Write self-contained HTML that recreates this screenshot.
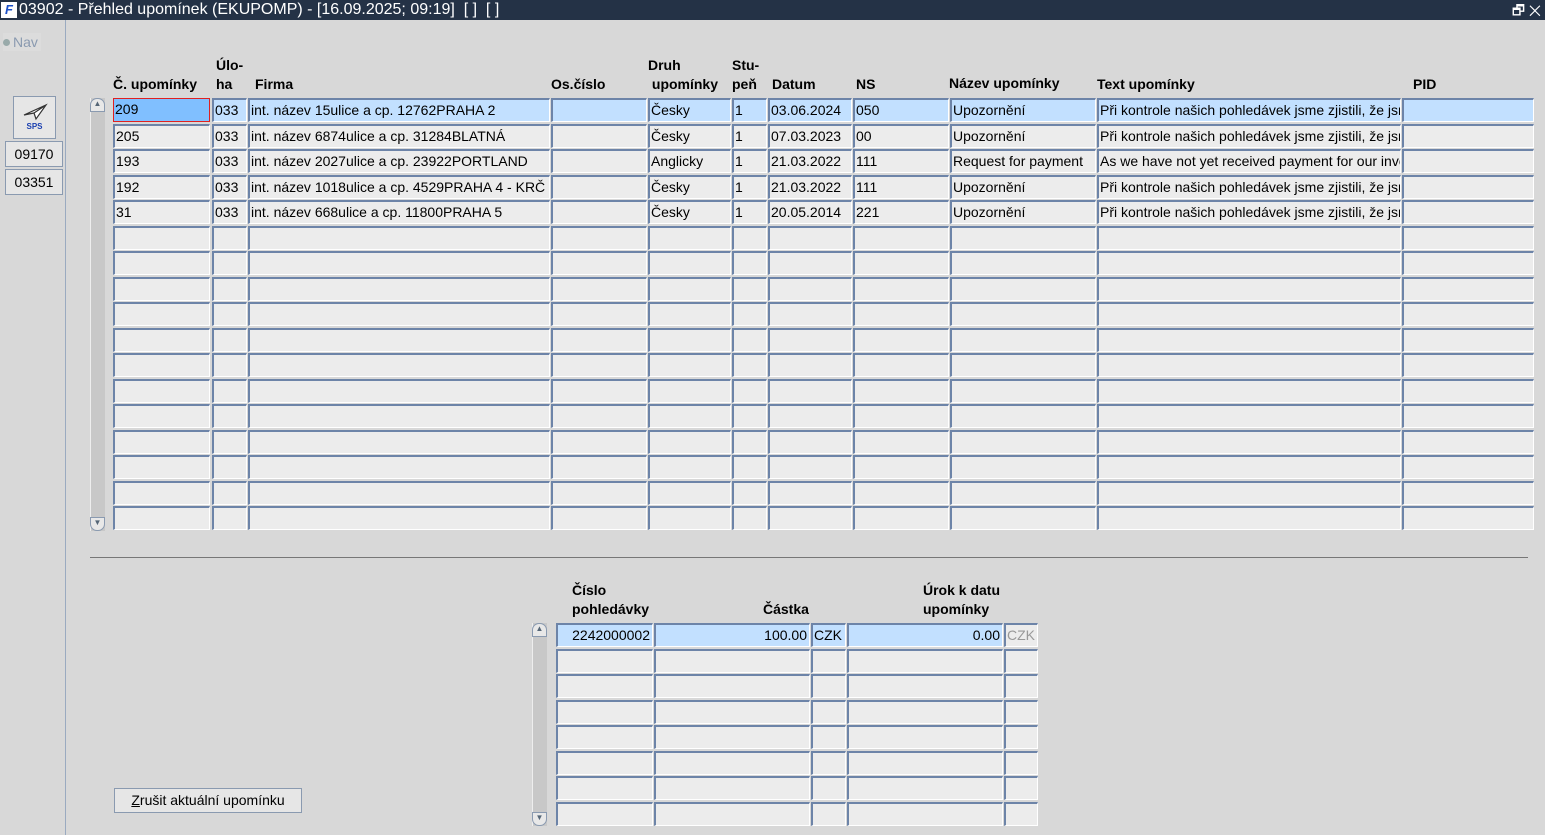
<!DOCTYPE html>
<html><head><meta charset="utf-8"><style>
body{margin:0;width:1545px;height:835px;background:#d8d8d8;font-family:"Liberation Sans",Arial,sans-serif;position:relative;overflow:hidden}
.a{position:absolute}
#title{left:0;top:0;width:1545px;height:20px;background:#243246;color:#fff;font-size:16px;line-height:20px}
.c{position:absolute;box-sizing:border-box;height:24px;background:#ececec;border-top:2px solid #6d84a8;border-left:2px solid #6d84a8;border-bottom:1px solid #fff;border-right:1px solid #fff;font-size:14px;line-height:20px;padding-left:1px;white-space:nowrap;overflow:hidden;color:#000}
.s{background:#c2e0ff}
.h{position:absolute;font-size:14px;font-weight:bold;line-height:19px;color:#000}
.btn{position:absolute;box-sizing:border-box;background:#e6e6e6;border:1px solid #8a9ab0;font-size:14px;text-align:center}
.sb{position:absolute;background:#c8c8c8;border-left:1px solid #eee}
.arr{position:absolute;left:-1px;width:15px;height:14px;background:#e8e8e8;border:1px solid #8a9ab0;box-sizing:border-box}
</style></head><body>
<div id="title" class="a"><span style="display:inline-block;width:16px;height:16px;background:#fff;color:#1a4fc9;font-size:13px;font-weight:bold;line-height:16px;text-align:center;vertical-align:top;margin:2px 2px 0 1px;font-style:italic">F</span>03902 - Přehled upomínek (EKUPOMP) - [16.09.2025; 09:19]&nbsp; [ ]&nbsp; [ ]<span style="position:absolute;right:4px;top:0;font-size:14px">🗗 ✕</span></div>
<div class="a" style="left:65px;top:20px;width:1px;height:815px;background:#9aaac0"></div>
<div class="a" style="left:3px;top:33px;width:38px;height:18px;background:#dcdcdc;color:#8a9ab0;font-size:14px;line-height:18px"><span style="display:inline-block;width:7px;height:7px;border-radius:50%;background:#9aa;margin-right:3px;vertical-align:1px"></span>Nav</div>
<div class="btn" style="left:13px;top:96px;width:43px;height:43px;font-size:8px;color:#1a3fb0;padding-top:25px;font-weight:bold">SPS<svg class="a" style="left:8px;top:6px" width="26" height="18"><path d="M2 12 L24 2 L14 16 L12 10 Z M12 10 L24 2" fill="#fff" stroke="#333" stroke-width="1.2"/></svg></div>
<div class="btn" style="left:5px;top:141px;width:58px;height:26px;line-height:24px">09170</div>
<div class="btn" style="left:5px;top:169px;width:58px;height:26px;line-height:24px">03351</div>
<div class="h" style="left:113px;top:75px">Č. upomínky</div>
<div class="h" style="left:216px;top:56px">Úlo-<br>ha</div>
<div class="h" style="left:255px;top:75px">Firma</div>
<div class="h" style="left:551px;top:75px">Os.číslo</div>
<div class="h" style="left:648px;top:56px">Druh<br>&nbsp;upomínky</div>
<div class="h" style="left:732px;top:56px">Stu-<br>peň</div>
<div class="h" style="left:772px;top:75px">Datum</div>
<div class="h" style="left:856px;top:75px">NS</div>
<div class="h" style="left:949px;top:74px">Název upomínky</div>
<div class="h" style="left:1097px;top:75px">Text upomínky</div>
<div class="h" style="left:1413px;top:75px">PID</div>
<div class="h" style="left:572px;top:581px">Číslo<br>pohledávky</div>
<div class="h" style="left:763px;top:600px">Částka</div>
<div class="h" style="left:923px;top:581px">Úrok k datu<br>upomínky</div>
<div class="sb" style="left:90px;top:98px;width:14px;height:433px"><div class="arr" style="top:0;border-radius:7px 7px 0 0;font-size:8px;text-align:center;color:#567">▲</div><div class="arr" style="bottom:0;border-radius:0 0 7px 7px;font-size:8px;text-align:center;color:#567">▼</div></div>
<div class="sb" style="left:532px;top:623px;width:14px;height:203px"><div class="arr" style="top:0;border-radius:7px 7px 0 0;font-size:8px;text-align:center;color:#567">▲</div><div class="arr" style="bottom:0;border-radius:0 0 7px 7px;font-size:8px;text-align:center;color:#567">▼</div></div>
<div class="a" style="left:90px;top:557px;width:1438px;height:1px;background:#777"></div>
<div class="btn" style="left:114px;top:788px;width:188px;height:25px;line-height:23px"><u>Z</u>rušit aktuální upomínku</div>
<div id="g"></div>
<script>
var cols=[[113,97],[212,35],[248,302],[551,96],[648,83],[732,35],[768,84],[853,96],[950,146],[1097,304],[1402,132]];
var data=[["209","033","int. název 15ulice a cp. 12762PRAHA 2","","Česky","1","03.06.2024","050","Upozornění","Při kontrole našich pohledávek jsme zjistili, že jsme","" ],
["205","033","int. název 6874ulice a cp. 31284BLATNÁ","","Česky","1","07.03.2023","00","Upozornění","Při kontrole našich pohledávek jsme zjistili, že jsme",""],
["193","033","int. název 2027ulice a cp. 23922PORTLAND","","Anglicky","1","21.03.2022","111","Request for payment","As we have not yet received payment for our invoice",""],
["192","033","int. název 1018ulice a cp. 4529PRAHA 4 - KRČ","","Česky","1","21.03.2022","111","Upozornění","Při kontrole našich pohledávek jsme zjistili, že jsme",""],
["31","033","int. název 668ulice a cp. 11800PRAHA 5","","Česky","1","20.05.2014","221","Upozornění","Při kontrole našich pohledávek jsme zjistili, že jsme",""]];
var h="";
for(var r=0;r<17;r++){var y=98+Math.round(r*25.5);for(var c=0;c<cols.length;c++){var t=(data[r]||[])[c]||"";var cls="c"+(r==0?" s":"");var st="left:"+cols[c][0]+"px;top:"+y+"px;width:"+cols[c][1]+"px;";if(r==0&&c==0)st+="background:#80bfff;border:1px solid #e02020;";h+='<div class="'+cls+'" style="'+st+'">'+t+'</div>';}}
var c2=[[556,97,"2242000002",1],[654,156,"100.00",1],[811,35,"CZK",0],[847,156,"0.00",1],[1004,34,"CZK",0]];
for(var r=0;r<8;r++){var y=623+Math.round(r*25.5);for(var c=0;c<c2.length;c++){var t=r==0?c2[c][2]:"";var st="left:"+c2[c][0]+"px;top:"+y+"px;width:"+c2[c][1]+"px;";if(c2[c][3])st+="text-align:right;padding-right:2px;";if(r==0&&c==4)st+="color:#999;background:#ececec;";h+='<div class="c'+(r==0&&c!=4?" s":"")+'" style="'+st+'">'+t+'</div>';}}
document.getElementById("g").innerHTML=h;
</script>
</body></html>
